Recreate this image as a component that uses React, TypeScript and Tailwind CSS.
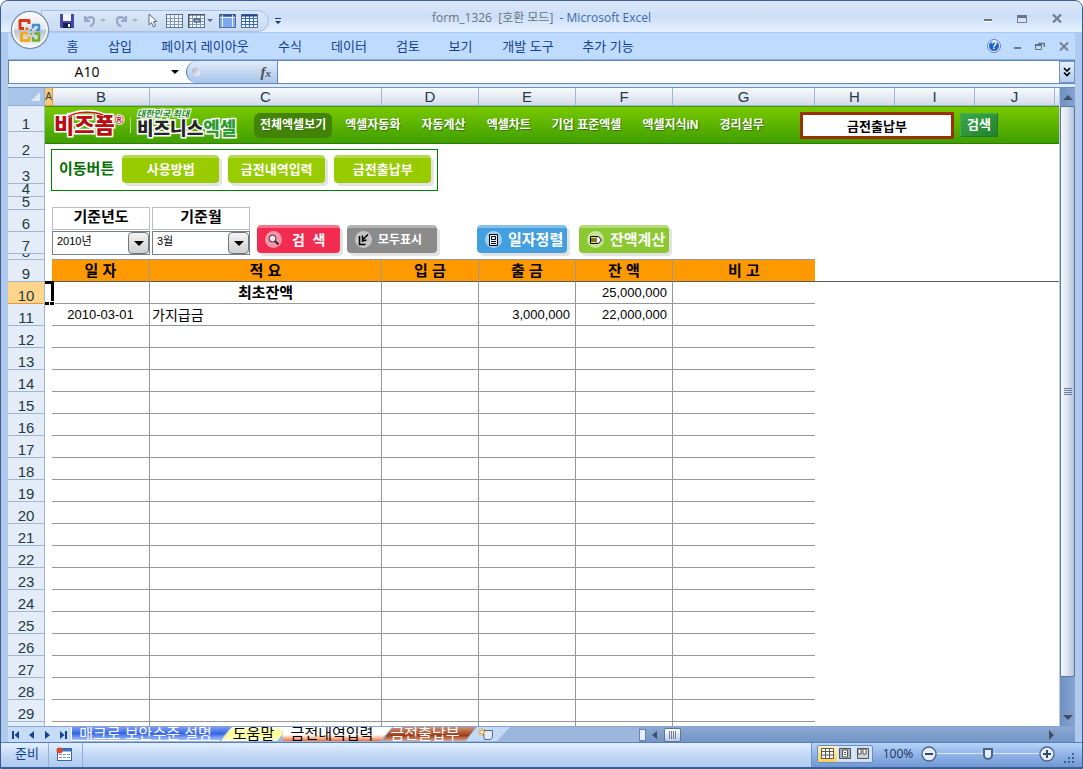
import { useState } from 'react';
import type { ReactNode } from 'react';

const menuTabs = [
  { label: '홈', width: 'w-[45px]' },
  { label: '삽입', width: 'w-[50px]' },
  { label: '페이지 레이아웃', width: 'w-[120px]' },
  { label: '수식', width: 'w-[50px]' },
  { label: '데이터', width: 'w-[68px]' },
  { label: '검토', width: 'w-[50px]' },
  { label: '보기', width: 'w-[55px]' },
  { label: '개발 도구', width: 'w-[80px]' },
  { label: '추가 기능', width: 'w-[80px]' },
];

const columns = [
  { name: 'A', width: 'w-[8px]' },
  { name: 'B', width: 'w-[97px]' },
  { name: 'C', width: 'w-[232px]' },
  { name: 'D', width: 'w-[97px]' },
  { name: 'E', width: 'w-[97px]' },
  { name: 'F', width: 'w-[97px]' },
  { name: 'G', width: 'w-[142px]' },
  { name: 'H', width: 'w-[80px]' },
  { name: 'I', width: 'w-[80px]' },
  { name: 'J', width: 'w-[80px]' },
];

const shortRows: Record<number, string> = {
  1: 'h-[26px]',
  2: 'h-[26px]',
  3: 'h-[26px]',
  4: 'h-[13px]',
  5: 'h-[13px]',
  8: 'h-[6px]',
};

const entries = [
  { date: '', note: '최초잔액', income: '', expense: '', balance: '25,000,000', opening: true },
  { date: '2010-03-01', note: '가지급금', income: '', expense: '3,000,000', balance: '22,000,000', opening: false },
];

const bannerLinks = ['엑셀자동화', '자동계산', '엑셀차트', '기업 표준엑셀', '엑셀지식iN', '경리실무'];

function GridIcon({ variant }: { variant: 'plain' | 'header' | 'window' | 'full' }) {
  return (
    <svg viewBox="0 0 17 14" className="h-[14px] w-[17px]">
      <rect x="0.5" y="0.5" width="16" height="13" fill={variant === 'window' ? '#7ea9ee' : '#f4f8ff'} stroke="#56709a" />
      {variant === 'window' && <path d="M1 1.500h15" stroke="#2c4f96" strokeWidth="2" />}
      {variant === 'window' && <path d="M1 3.500h15M3.5 1v12M13.5 1v12" stroke="#e8f1ff" />}
      {variant !== 'window' && <path d="M1 4.5h15M1 7.5h15M1 10.5h15M4.5 1v12M8.5 1v12M12.5 1v12" stroke={variant === 'full' ? '#3569c4' : '#7f9ac2'} />}
      {variant === 'full' && <path d="M1 1.5h15" stroke="#23458a" strokeWidth="2" />}
      {variant === 'header' && <path d="M0 1h17M1 0v14M6 5h6v3H6z" stroke="#3c4350" fill="#8fb3ea" />}
    </svg>
  );
}

function OfficeOrb() {
  return (
    <svg viewBox="0 0 40 40" className="h-10 w-10">
      <defs>
        <linearGradient id="orb" x1="0" y1="0" x2="0" y2="1">
          <stop offset="0" stopColor="#ffffff" />
          <stop offset="0.48" stopColor="#dfe5ee" />
          <stop offset="0.52" stopColor="#b9c3d3" />
          <stop offset="1" stopColor="#ffffff" />
        </linearGradient>
      </defs>
      <circle cx="20" cy="20" r="18.5" fill="url(#orb)" stroke="#7d8eaa" strokeWidth="1.5" />
      <circle cx="20" cy="20" r="17" fill="none" stroke="#fff" strokeWidth="1.5" />
      <g fill="none" strokeWidth="3" strokeLinejoin="round">
        <path d="M14 18.5h-4v-8h9v3.500" stroke="#d63a13" />
        <path d="M23 18.500v-3.500h6v5h-3" stroke="#3f8fd2" strokeWidth="2.500" />
        <path d="M18 23h-6.500v7.500h7.500v-4" stroke="#f3ab1d" />
        <path d="M23 27v3.500h6v-7h-4.500" stroke="#6eae2d" strokeWidth="2.500" />
      </g>
      <path d="M15.500 17.500h3v2.500h-3z" fill="#e66b20" />
      <path d="M20 19h2v2h-2z" fill="#4f9bd8" />
      <path d="M20 23h2v2h-2z" fill="#8bb93a" />
    </svg>
  );
}

function TitleBar() {
  return (
    <header className="relative flex h-8 shrink-0 items-center border-b border-[#a5cdf3] bg-linear-to-b from-[#dce7f8] via-[#cbdff8] to-[#e6f1fe]">
      <div className="mt-2 ml-10 flex h-[22px] w-[228px] items-center rounded-r-full border border-[#a9c0de] bg-linear-to-b from-[#dae7f8] to-[#c8daf2] pl-[18px]">
        <button aria-label="저장">
          <svg viewBox="0 0 14 14" className="h-[14px] w-[14px]">
            <path d="M0 0h14v14H1l-1-1z" fill="#4646a8" />
            <path d="M3 0h8v7H3z" fill="#f2f5fb" />
            <path d="M3 9h8v5H3z" fill="#191f4c" />
            <path d="M8 10h2v3H8z" fill="#fff" />
          </svg>
        </button>
        <button aria-label="실행 취소" className="ml-[9px]">
          <svg viewBox="0 0 13 14" className="h-[14px] w-[13px]">
            <path d="M2 2v5h5M2.500 6.500C5 2 11 2 11 6.500c0 3-2 5-4 6" fill="none" stroke="#98a9c6" strokeWidth="2.200" />
          </svg>
        </button>
        <span className="ml-1 border-x-[3px] border-t-[3px] border-x-transparent border-t-[#a9b2c2]" />
        <button aria-label="다시 실행" className="ml-[9px]">
          <svg viewBox="0 0 13 14" className="h-[14px] w-[13px]">
            <path d="M11 2v5H6M10.500 6.500C8 2 2 2 2 6.500c0 3 2 5 4 6" fill="none" stroke="#98a9c6" strokeWidth="2.200" />
          </svg>
        </button>
        <span className="ml-1 border-x-[3px] border-t-[3px] border-x-transparent border-t-[#a9b2c2]" />
        <button aria-label="개체 선택" className="ml-[10px]">
          <svg viewBox="0 0 10 15" className="h-[15px] w-[10px]">
            <path d="M1 1v11l2.500-2.500 2 4.500 2-1-2-4.500H9z" fill="#fff" stroke="#5b6a86" />
          </svg>
        </button>
        <button aria-label="표" className="ml-2"><GridIcon variant="plain" /></button>
        <button aria-label="틀 고정" className="ml-[5px]"><GridIcon variant="header" /></button>
        <span className="ml-[2px] border-x-[3px] border-t-[3px] border-x-transparent border-t-[#44679c]" />
        <button aria-label="창" className="ml-[6px]"><GridIcon variant="window" /></button>
        <button aria-label="눈금선" className="ml-[5px]"><GridIcon variant="full" /></button>
      </div>
      <button aria-label="빠른 실행 도구 모음 사용자 지정" className="mt-2 ml-[6px] flex w-[6px] flex-col gap-[2px]">
        <span className="h-px bg-[#173d74]" />
        <span className="border-x-[3px] border-t-[3px] border-x-transparent border-t-[#173d74]" />
      </button>
      <h1 className="mt-[2px] ml-[151px] font-['Open_Sans','Noto_Sans_CJK_KR',sans-serif] text-xs whitespace-pre text-[#6b7480]">
        form_1326&nbsp; [호환 모드]&nbsp; <span className="text-[#4068a8]">- Microsoft Excel</span>
      </h1>
      <div className="mt-1 mr-5 ml-auto flex items-center gap-[25px]">
        <button aria-label="최소화" className="mt-1 h-[3px] w-2 border-b border-white bg-[#6c7482]" />
        <button aria-label="최대화" className="h-2 w-[10px] border border-t-[3px] border-[#7284a1] border-t-[#6b7380]" />
        <button aria-label="닫기">
          <svg viewBox="0 0 10 9" className="h-[9px] w-[10px]">
            <path d="M1 .5l8 8M9 .5l-8 8" stroke="#6f7e96" strokeWidth="2.200" />
          </svg>
        </button>
      </div>
    </header>
  );
}

function MenuBar() {
  return (
    <div className="flex h-[27px] shrink-0 items-center border-b border-[#8dafd9] bg-[#bfdbff] text-[13px] text-[#15428b]">
      <nav className="ml-[42px] flex pt-px">
        {menuTabs.map((tab) => (
          <button key={tab.label} className={`${tab.width} shrink-0 text-center leading-5 whitespace-nowrap`}>
            {tab.label}
          </button>
        ))}
      </nav>
      <div className="mr-[6px] ml-auto flex items-center gap-[14px]">
        <button aria-label="도움말" className="flex h-[12px] w-[12px] items-center justify-center rounded-full border border-white bg-[#1d5fcc] text-[10px] leading-3 font-bold text-white outline outline-[#5d86c2]">?</button>
        <button aria-label="창 최소화" className="mt-1 h-[2px] w-[7px] bg-[#737984]" />
        <button aria-label="창 복원">
          <svg viewBox="0 0 10 8" className="h-2 w-[10px]">
            <path d="M3 1.500h6.500V5" fill="none" stroke="#69707c" strokeWidth="1.500" />
            <path d="M.5 3.500h6v4h-6z" fill="none" stroke="#69707c" />
            <path d="M0 3h7" stroke="#69707c" strokeWidth="2" />
          </svg>
        </button>
        <button aria-label="창 닫기">
          <svg viewBox="0 0 10 9" className="h-[9px] w-[10px]">
            <path d="M1 .5l8 8M9 .5l-8 8" stroke="#7a818f" strokeWidth="2" />
          </svg>
        </button>
      </div>
    </div>
  );
}

function FormulaBar() {
  return (
    <div className="flex h-[24px] shrink-0 border-y border-[#5f87b7] bg-white">
      <div className="flex w-[178px] items-center border-l border-[#5f87b7]">
        <input
          aria-label="이름 상자"
          defaultValue="A10"
          className="w-[156px] text-center font-['Open_Sans',sans-serif] text-[14px] leading-5 text-black outline-none"
        />
        <span className="ml-[6px] border-x-4 border-t-4 border-x-transparent border-t-black" />
      </div>
      <div className="flex w-[92px] items-center justify-between rounded-l-full border-x border-[#5f87b7] bg-linear-to-b from-[#e0ebfa] to-[#a9c4ea] pr-[6px] pl-[5px]">
        <span className="h-2 w-2 rounded-full bg-linear-to-br from-[#a3abb8] to-white" />
        <button className="font-['Liberation_Serif',serif] text-[15px] leading-5 font-bold text-[#4a4f58] italic">f<span className="text-[11px]">x</span></button>
      </div>
      <input aria-label="수식 입력줄" className="min-w-0 flex-1 px-2 text-[13px] outline-none" />
      <button aria-label="수식 입력줄 확장" className="flex w-4 items-center justify-center border border-[#6f94c4] bg-linear-to-b from-[#e5effb] to-[#b4cdf0]">
        <svg viewBox="0 0 8 10" className="h-[10px] w-2">
          <path d="M1 1l3 3 3-3M1 5.500l3 3 3-3" fill="none" stroke="#000" strokeWidth="1.700" />
        </svg>
      </button>
    </div>
  );
}

function RowHeaders() {
  const rows = Array.from({ length: 30 }, (_, i) => i + 1);
  return (
    <div className="flex w-[37px] shrink-0 flex-col overflow-hidden text-[15px] leading-[11px] text-[#253a44]">
      <div className="flex h-[18px] shrink-0 items-end justify-end border-r border-b border-[#8fadd2] bg-[#a9c4e9] pr-1 pb-1">
        <span className="border-b-[9px] border-l-[9px] border-b-[#dfe9f6] border-l-transparent" />
      </div>
      {rows.map((row) => (
        <div
          key={row}
          className={`flex shrink-0 items-end justify-center overflow-hidden border-r border-b pb-[2px] ${shortRows[row] ?? 'h-[22px]'} ${
            row === 10 ? 'border-[#f29536] border-r-[#9eb6ce] bg-[#ffd58d]' : 'border-[#9eb6ce] bg-[#e4ecf7]'
          }`}
        >
          {row}
        </div>
      ))}
    </div>
  );
}

function ColumnHeaders() {
  return (
    <div className="flex h-[18px] shrink-0 text-[15px] leading-[18px] text-[#253a44]">
      {columns.map((col) => (
        <div
          key={col.name}
          className={`${col.width} flex shrink-0 justify-center border-r border-b ${
            col.name === 'A'
              ? 'border-[#f29536] bg-[#f7c97b] text-[10px]'
              : 'border-[#9eb6ce] bg-linear-to-b from-[#f9fcfd] to-[#d3dbe9]'
          }`}
        >
          {col.name}
        </div>
      ))}
      <div className="flex-1 border-b border-[#9eb6ce] bg-linear-to-b from-[#f9fcfd] to-[#d3dbe9]" />
    </div>
  );
}

function Banner() {
  return (
    <div className="flex h-[38px] shrink-0 items-center border-t border-b border-t-[#3f9c00] border-b-[#2c7d00] bg-linear-to-b from-[#78c800] to-[#3f9f00] font-bold text-white">
      <a href="#bizform" className="relative mt-[2px] ml-[9px] flex w-[76px] text-[22px] leading-6 font-black text-[#b80d12] [-webkit-text-stroke:3px_white] [paint-order:stroke_fill]">
        비즈폼
        <span className="text-[12px] leading-3 [-webkit-text-stroke:2px_white]">®</span>
        <svg viewBox="0 0 40 8" className="absolute -top-1 left-3 h-2 w-10">
          <path d="M1 7C10 0 28 0 38 5" fill="none" stroke="#fff" strokeWidth="3.500" />
          <path d="M2 7C10 1 28 1 37 5" fill="none" stroke="#c41a15" strokeWidth="1.500" />
        </svg>
      </a>
      <span className="h-4 w-px bg-[#b5e07c]" />
      <a href="#business-excel" className="mb-[2px] ml-[6px] flex w-[100px] flex-col [paint-order:stroke_fill]">
        <span className="text-[9px] leading-[10px] text-[#23872d] italic [-webkit-text-stroke:2px_white]">대한민국 최대</span>
        <span className="text-[18px] leading-[20px] font-black whitespace-nowrap text-[#242424] [-webkit-text-stroke:3px_white]">
          비즈니스<span className="text-[#2f9c36]">엑셀</span>
        </span>
      </a>
      <nav className="ml-[17px] flex items-center text-xs leading-[25px] whitespace-nowrap [text-shadow:1px_1px_1px_#2f7200]">
        <a href="#all" className="mr-[13px] rounded-md bg-[#438408] px-[6px]">전체엑셀보기</a>
        <span className="flex gap-[21px]">
          {bannerLinks.map((link) => (
            <a key={link} href="#menu">{link}</a>
          ))}
        </span>
      </nav>
      <input
        aria-label="검색어"
        defaultValue="금전출납부"
        className="ml-auto h-[27px] w-[154px] border-[3px] border-[#9c3100] bg-white text-center text-[13px] leading-5 font-bold text-black outline-none"
      />
      <button className="mr-[61px] ml-[6px] h-6 w-[38px] border border-[#1d7a2c] border-t-[#43ad4e] border-l-[#43ad4e] bg-linear-to-br from-[#3aa947] to-[#23802f] text-[13px] leading-5">검색</button>
    </div>
  );
}

function MoveButton({ children }: { children: ReactNode }) {
  return (
    <button className="h-7 w-[97px] rounded-sm border-t-[3px] border-[#b5db4c] bg-[#99cc00] pb-[2px] text-[13px] leading-5 font-bold text-white shadow-[3px_3px_0_#e3e3e3]">
      {children}
    </button>
  );
}

function ActionButton({ color, width, icon, children }: { color: string; width: string; icon: ReactNode; children: ReactNode }) {
  return (
    <button className={`flex h-7 items-center gap-[6px] rounded-sm border-t-[3px] border-white/35 pb-[2px] pl-2 leading-6 font-bold whitespace-pre text-white shadow-[3px_3px_0_#e3e3e3] ${color} ${width}`}>
      <svg viewBox="0 0 17 17" className="h-[17px] w-[17px] shrink-0">
        <circle cx="8.500" cy="8.500" r="8.500" fill="#fff" opacity="0.5" />
        {icon}
      </svg>
      {children}
    </button>
  );
}

function Picker({ label, options }: { label: string; options: string[] }) {
  const [value, setValue] = useState(options[0]);
  return (
    <label className="flex w-[98px] flex-col text-center text-[15px] font-bold">
      <span className="mb-px h-[23px] border border-[#bdbdbd] leading-[18px]">{label}</span>
      <span className="relative flex h-6 border border-[#75808a]">
        <select
          value={value}
          onChange={(e) => setValue(e.target.value)}
          className="w-full appearance-none bg-white pb-1 pl-1 text-[11px] leading-4 font-normal outline-none"
        >
          {options.map((option) => (
            <option key={option}>{option}</option>
          ))}
        </select>
        <span className="pointer-events-none absolute inset-y-0 right-0 flex w-[21px] items-center justify-center rounded-sm border border-[#70767c] bg-linear-to-b from-[#f4f4f4] to-[#cfcfcf]">
          <span className="border-x-[5px] border-t-[5px] border-x-transparent border-t-black" />
        </span>
      </span>
    </label>
  );
}

function Ledger() {
  const blanks = Array.from({ length: 19 }, (_, i) => i);
  const head = 'border-r border-[#a09a8c] last:border-r-0';
  const cell = 'h-[22px] border-r border-b border-[#969696] p-0 last:border-r-0';
  return (
    <table className="w-[763px] shrink-0 table-fixed border-separate border-spacing-0 text-[13px] leading-5 text-black">
      <colgroup>
        <col className="w-[98px]" />
        <col className="w-[232px]" />
        <col className="w-[97px]" />
        <col className="w-[97px]" />
        <col className="w-[97px]" />
        <col className="w-[142px]" />
      </colgroup>
      <thead>
        <tr className="bg-[#ff9900] text-[15px] leading-5">
          {['일 자', '적 요', '입 금', '출 금', '잔 액', '비 고'].map((title) => (
            <th key={title} className={`h-[23px] border-t border-b border-t-[#969696] border-b-[#5c5c5c] p-0 ${head}`}>{title}</th>
          ))}
        </tr>
      </thead>
      <tbody>
        {entries.map((entry) => (
          <tr key={entry.note}>
            <td className={`${cell} text-center`}>{entry.date}</td>
            <td className={`${cell} ${entry.opening ? 'text-center text-[15px] font-bold' : 'pl-[2px] text-[14px]'}`}>{entry.note}</td>
            <td className={`${cell} text-right`}>{entry.income}</td>
            <td className={`${cell} pr-[5px] text-right`}>{entry.expense}</td>
            <td className={`${cell} pr-[5px] text-right`}>{entry.balance}</td>
            <td className={cell} />
          </tr>
        ))}
        {blanks.map((i) => (
          <tr key={i}>
            <td className={cell} />
            <td className={cell} />
            <td className={cell} />
            <td className={cell} />
            <td className={cell} />
            <td className={cell} />
          </tr>
        ))}
      </tbody>
    </table>
  );
}

function Sheet() {
  return (
    <div className="flex min-w-0 flex-1 flex-col overflow-hidden bg-white">
      <ColumnHeaders />
      <Banner />
      <div className="mt-[5px] ml-[6px] flex h-[42px] w-[387px] shrink-0 items-center gap-[9px] border border-[#008000] pb-[2px] pl-[7px]">
        <span className="-mr-px text-[15px] leading-5 font-bold whitespace-nowrap text-[#007000]">이동버튼</span>
        <MoveButton>사용방법</MoveButton>
        <MoveButton>금전내역입력</MoveButton>
        <MoveButton>금전출납부</MoveButton>
      </div>
      <div className="mt-4 ml-[7px] flex h-12 shrink-0 items-end">
        <div className="flex gap-[2px]">
          <Picker label="기준년도" options={['2010년', '2011년', '2012년']} />
          <Picker label="기준월" options={['3월', '4월', '5월']} />
        </div>
        <div className="mb-[2px] ml-[7px] flex gap-[7px]">
          <ActionButton
            color="bg-[#f22b50]"
            width="w-[83px] text-[14px]"
            icon={<g fill="none" stroke="#3b2a3a"><circle cx="7.500" cy="7.500" r="3.500" fill="#f3e3ee" /><path d="M10 10l3.500 3.500" strokeWidth="2.200" /></g>}
          >
            {' 검  색'}
          </ActionButton>
          <ActionButton
            color="bg-[#8b8b8b]"
            width="w-[90px] text-[12px]"
            icon={<path d="M4.500 5v8.500h6M13 3.500L7.500 9M7.500 4.500V10l4-1" fill="none" stroke="#000" strokeWidth="1.500" />}
          >
            모두표시
          </ActionButton>
        </div>
        <div className="mb-[2px] ml-10 flex gap-3">
          <ActionButton
            color="bg-[#449fde]"
            width="w-[90px] text-[15px]"
            icon={<g fill="none" stroke="#000"><path d="M4.500 3.500h8v11h-8z" fill="#d9ecfa" /><path d="M6.500 5.500h4v3h-4zM6 10.500h5M6 12.500h5" /></g>}
          >
            일자정렬
          </ActionButton>
          <ActionButton
            color="bg-[#8cc832]"
            width="w-[90px] text-[15px]"
            icon={<g stroke="#000"><path d="M3.500 5.500h6v7h-6z" fill="#ffef3a" /><path d="M9.500 5.500h2l3 3.500-3 3.500h-2" fill="#fff" /><path d="M4 8h5M4 10h5" /></g>}
          >
            잔액계산
          </ActionButton>
        </div>
      </div>
      <div className="relative mt-1 flex min-h-0 flex-1 items-start overflow-hidden pl-[7px]">
        <Ledger />
        <div className="h-[23px] flex-1 border-b border-[#5c5c5c]" />
        {/* selected cell frame */}
        <div className="absolute top-[22px] left-0 h-[24px] w-[9px] border-[3px] border-l-0 border-black" />
        <div className="absolute top-[42px] left-[4px] h-[5px] w-[6px] border border-white bg-black" />
      </div>
    </div>
  );
}

function VerticalScroll() {
  return (
    <div className="flex w-4 shrink-0 flex-col border-l border-[#b8cde9] bg-linear-to-r from-[#6f92c2] to-[#86a5d0]">
      <button aria-label="위로" className="flex h-[18px] shrink-0 items-center justify-center">
        <span className="border-x-[5px] border-b-[5px] border-x-transparent border-b-[#454d68]" />
      </button>
      <div className="flex flex-[571] flex-col items-center justify-center gap-px rounded-xs border border-[#5f769c] bg-linear-to-r from-[#f5f7fa] via-[#dce4f0] to-[#b3c4dc]">
        <span className="h-px w-2 bg-[#6c7d99]" />
        <span className="h-px w-2 bg-[#6c7d99]" />
        <span className="h-px w-2 bg-[#6c7d99]" />
        <span className="h-px w-2 bg-[#6c7d99]" />
      </div>
      <div className="flex-[31]" />
      <button aria-label="아래로" className="flex h-[18px] shrink-0 items-center justify-center">
        <span className="border-x-[5px] border-t-[5px] border-x-transparent border-t-[#454d68]" />
      </button>
    </div>
  );
}

function SheetTabs() {
  return (
    <div className="flex h-[16px] shrink-0 overflow-hidden border-t border-[#86a4cf] bg-[#9cb7de] text-[15px] leading-[14px]">
      <div className="flex w-[63px] shrink-0 items-center justify-around bg-[#c5dbf8]">
        <button aria-label="처음"><svg viewBox="0 0 7 8" className="h-2 w-[7px]"><path d="M0 0h2v8H0zM7 0v8L2.500 4z" fill="#15428b" /></svg></button>
        <button aria-label="이전"><svg viewBox="0 0 7 8" className="h-2 w-[7px]"><path d="M6 0v8L1 4z" fill="#15428b" /></svg></button>
        <button aria-label="다음"><svg viewBox="0 0 7 8" className="h-2 w-[7px]"><path d="M1 0v8l5-4z" fill="#15428b" /></svg></button>
        <button aria-label="마지막"><svg viewBox="0 0 7 8" className="h-2 w-[7px]"><path d="M7 0H5v8h2zM0 0v8l4.500-4z" fill="#15428b" /></svg></button>
      </div>
      <button className="h-[14px] w-[160px] shrink-0 overflow-hidden border-b border-l border-white bg-linear-to-b from-[#7f9df2] via-[#3665e4] via-50% to-[#a9bff8] pr-3 leading-[13px] whitespace-nowrap text-white [clip-path:polygon(0_0,100%_0,148px_100%,0_100%)]">
        매크로 보안수준 설명
      </button>
      <button className="-ml-[10px] h-[14px] w-[61px] shrink-0 overflow-hidden bg-linear-to-b from-[#ffffd8] via-[#ffff8e] to-[#ffffda] pl-1 whitespace-nowrap text-black [clip-path:polygon(11px_0,100%_0,100%_8px,56px_100%,0_100%)]">
        도움말
      </button>
      <button className="h-[14px] w-[110px] shrink-0 overflow-hidden bg-linear-to-b from-white from-55% to-[#f26a1b] pr-[10px] whitespace-nowrap text-black [clip-path:polygon(0_0,100%_0,98px_100%,1px_100%)]">
        금전내역입력
      </button>
      <button className="-ml-[10px] h-[14px] w-[94px] shrink-0 overflow-hidden bg-linear-to-b from-[#cf9376] via-[#9c3b12] via-60% to-[#dba78d] pr-2 whitespace-nowrap text-white [clip-path:polygon(11px_0,100%_0,83px_100%,0_100%)]">
        금전출납부
      </button>
      <button aria-label="워크시트 삽입" className="-ml-[10px] flex h-[14px] w-[44px] shrink-0 items-center justify-center bg-[#c3d9f6] pr-1 [clip-path:polygon(11px_0,100%_0,31px_100%,0_100%)]">
        <svg viewBox="0 0 16 12" className="h-3 w-4">
          <path d="M5 2.500h9.500v7L12 11.500H6.500z" fill="#e3edfb" stroke="#53688f" />
          <path d="M4 0v8M0 4h8M1 1l6 6M7 1L1 7" stroke="#e99a1e" />
          <circle cx="4" cy="4" r="1.500" fill="#fff6c4" />
        </svg>
      </button>
      <div className="flex min-w-0 flex-1 items-center justify-end">
        <div className="flex h-full w-[436px] items-center bg-linear-to-b from-[#8aa8d2] to-[#7395c5]">
          <span className="h-3 w-[7px] border border-[#6b82a9] bg-[#e6eefa]" />
          <button aria-label="왼쪽" className="ml-[6px] border-y-[4px] border-r-[5px] border-y-transparent border-r-[#454d68]" />
          <span className="ml-[7px] flex h-[14px] w-[17px] items-center justify-center gap-px rounded-xs border border-[#5f769c] bg-linear-to-b from-white to-[#bccbe2]">
            <span className="h-2 w-px bg-[#6c7d99]" />
            <span className="h-2 w-px bg-[#6c7d99]" />
            <span className="h-2 w-px bg-[#6c7d99]" />
            <span className="h-2 w-px bg-[#6c7d99]" />
          </span>
          <button aria-label="오른쪽" className="mr-[21px] ml-auto border-y-[5px] border-l-[5px] border-y-transparent border-l-[#454d68]" />
        </div>
      </div>
    </div>
  );
}

function StatusBar() {
  return (
    <footer className="flex h-[26px] shrink-0 border-t border-b border-t-[#557fb8] border-b-[#3b619c] bg-linear-to-b from-[#e3effe] via-[#c2d8f5] to-[#afcaf0] text-[13px] text-[#15428b]">
      <span className="flex w-12 items-center justify-end border-r border-[#8fb0de] pr-[9px] pb-[3px] leading-5 whitespace-nowrap">준비</span>
      <button aria-label="매크로 기록" className="flex w-[34px] items-center justify-center border-r border-[#8fb0de] pr-1 pb-[3px]">
        <svg viewBox="0 0 16 14" className="h-[14px] w-4">
          <rect x="1.500" y="1.500" width="14" height="12" fill="#fff" stroke="#3a62a8" />
          <path d="M2 3h13" stroke="#3f6fc0" strokeWidth="3" />
          <path d="M3 7.500h3M7 7.500h3M11 7.500h3M3 10.500h3M7 10.500h3M11 10.500h3" stroke="#7d93b8" />
          <circle cx="3.500" cy="3.500" r="3" fill="#d9472b" />
        </svg>
      </button>
      <div className="ml-auto flex w-[271px] items-center border-l border-[#6f97cf] bg-linear-to-b from-[#b7d3f9] via-[#8fb3e6] to-[#6f98d3] pb-[3px] pl-[5px]">
        <div className="flex h-[18px] w-14 shrink-0 overflow-hidden rounded-xs border border-[#6c8cbb] bg-[#cfe0f7]">
          <button aria-label="기본" className="flex w-[19px] items-center justify-center bg-linear-to-b from-[#fff0c0] to-[#fcd056]">
            <svg viewBox="0 0 13 11" className="h-[11px] w-[13px]"><path d="M.5.5h12v10H.5zM.5 3.500h12M.5 7h12M4.500.5v10M8.500.5v10" fill="#fff" stroke="#5e5a4c" /></svg>
          </button>
          <button aria-label="페이지 레이아웃" className="flex w-[18px] items-center justify-center border-x border-[#e6f0fc]">
            <svg viewBox="0 0 12 11" className="h-[11px] w-3"><path d="M.5.5h11v10H.5z" fill="#aab2bd" stroke="#555" /><path d="M3.500 2h5v7h-5z" fill="#fff" stroke="#555" /><path d="M5 4.500h2M5 6.500h2" stroke="#555" /></svg>
          </button>
          <button aria-label="페이지 나누기 미리 보기" className="flex w-[18px] items-center justify-center">
            <svg viewBox="0 0 12 11" className="h-[11px] w-3"><path d="M.5.5h11v10H.5z" fill="#cdd1d8" stroke="#555" /><path d="M1 1h3v5H1zM6 1h3v5H6z" fill="#fff" stroke="#555" /></svg>
          </button>
        </div>
        <button className="ml-2 w-[34px] shrink-0 font-['Open_Sans',sans-serif] text-[12px] leading-5 text-[#1c2f5c]">100%</button>
        <button aria-label="축소" className="ml-[6px] shrink-0">
          <svg viewBox="0 0 16 16" className="h-4 w-4"><circle cx="8" cy="8" r="7" fill="#e4edf9" stroke="#4c648c" strokeWidth="1.300" /><path d="M4 8h8" stroke="#344a6d" strokeWidth="2" /></svg>
        </button>
        <label className="relative flex w-[102px] shrink-0 items-center">
          <input type="range" aria-label="확대/축소" min="0" max="100" defaultValue="50" className="h-px w-full appearance-none bg-[#e0ebfa] [&::-webkit-slider-thumb]:h-3 [&::-webkit-slider-thumb]:w-[10px] [&::-webkit-slider-thumb]:appearance-none [&::-webkit-slider-thumb]:rounded-b-full [&::-webkit-slider-thumb]:border-2 [&::-webkit-slider-thumb]:border-[#4c648c] [&::-webkit-slider-thumb]:bg-[#e4edf9]" />
        </label>
        <button aria-label="확대" className="shrink-0">
          <svg viewBox="0 0 16 16" className="h-4 w-4"><circle cx="8" cy="8" r="7" fill="#e4edf9" stroke="#4c648c" strokeWidth="1.300" /><path d="M4 8h8M8 4v8" stroke="#344a6d" strokeWidth="2" /></svg>
        </button>
        <svg viewBox="0 0 12 12" className="mt-2 ml-2 h-3 w-3">
          <path d="M9 1h2v2H9zM5 5h2v2H5zM9 5h2v2H9zM1 9h2v2H1zM5 9h2v2H5zM9 9h2v2H9z" fill="#425f91" />
        </svg>
      </div>
    </footer>
  );
}

export default function App() {
  return (
    <div className="relative flex h-screen flex-col overflow-hidden rounded-t-lg border border-[#3b5d92] bg-[#b0caee] font-['Liberation_Sans','Noto_Sans_CJK_KR',sans-serif]">
      <TitleBar />
      <button aria-label="Office 단추" className="absolute top-[9px] left-[9px]">
        <OfficeOrb />
      </button>
      <div className="mx-[7px] flex min-h-0 flex-1 flex-col">
        <MenuBar />
        <FormulaBar />
        <div className="h-[3px] shrink-0 bg-[#dfebfa]" />
        <div className="flex min-h-0 flex-1 border-t border-[#6b90c0]">
          <RowHeaders />
          <Sheet />
          <VerticalScroll />
        </div>
        <SheetTabs />
      </div>
      <StatusBar />
    </div>
  );
}
